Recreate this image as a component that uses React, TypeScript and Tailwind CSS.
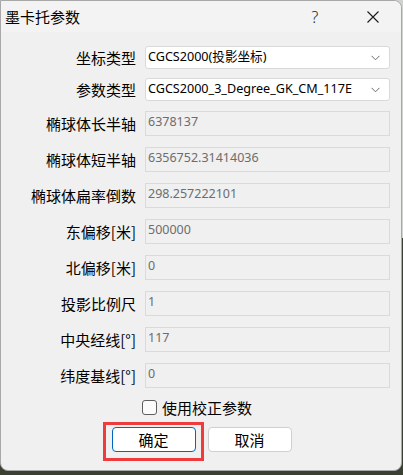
import React, { useState } from "react";

const cjk = "font-['Microsoft_YaHei','Noto_Sans_CJK_SC',sans-serif]";
const latin = "font-['Noto_Sans','Noto_Sans_CJK_SC',sans-serif]";

interface Field {
  label: React.ReactNode;
  value: string;
}

const fields: Field[] = [
  { label: "椭球体长半轴", value: "6378137" },
  { label: "椭球体短半轴", value: "6356752.31414036" },
  { label: "椭球体扁率倒数", value: "298.257222101" },
  { label: "东偏移[米]", value: "500000" },
  { label: "北偏移[米]", value: "0" },
  { label: "投影比例尺", value: "1" },
  { label: "中央经线[°]", value: "117" },
  { label: "纬度基线[°]", value: "0" },
];

const Chevron = () => (
  <svg width="9" height="6" viewBox="0 0 9 6" className="shrink-0">
    <path d="M0.5 0.8 L4.5 4.8 L8.5 0.8" fill="none" stroke="#6a6a6a" strokeWidth="1" />
  </svg>
);

const SelectBox = ({ value }: { value: string }) => (
  <div className="flex h-[23px] w-[245px] items-center justify-between rounded-[3px] border border-[#d9d9d9] bg-white pl-[2px] pr-[9px]">
    <span className={`${latin} text-[12.6px] leading-none text-black`}>{value}</span>
    <Chevron />
  </div>
);

const Row = ({ label, children, className }: { label: React.ReactNode; children: React.ReactNode; className: string }) => (
  <div className={`flex items-center ${className}`}>
    <div className={`${cjk} w-[135px] text-right text-[15px] leading-none text-black`}>{label}</div>
    <div className="ml-[9px]">{children}</div>
  </div>
);

export default function App() {
  const [useCorrection, setUseCorrection] = useState(false);

  return (
    <div className="h-[475px] w-[403px] bg-[linear-gradient(to_bottom,#cfd2cf_50%,#3a4133_50%)]">
      <div className="flex h-[471px] w-[402px] flex-col overflow-hidden rounded-tr-[8px] rounded-b-[8px] border border-[#a8a8a8] bg-[#f0f0f0]">
        {/* title bar */}
        <div className="flex h-[31px] shrink-0 items-center bg-[#f3f3f3]">
          <span className={`${cjk} pl-[4px] text-[15px] leading-none text-black`}>墨卡托参数</span>
          <span className={`${latin} ml-auto w-[46px] text-center text-[16px] font-light leading-none text-[#1a1a1a]`}>?</span>
          <span className="ml-[12px] mr-[5px] flex w-[46px] justify-center">
            <svg width="12" height="12" viewBox="0 0 12 12">
              <path d="M0.5 0.5 L11.5 11.5 M11.5 0.5 L0.5 11.5" stroke="#1a1a1a" strokeWidth="1.1" />
            </svg>
          </span>
        </div>

        {/* body */}
        <div className="flex flex-col">
          <Row label="坐标类型" className="mt-[14px]">
            <SelectBox value="CGCS2000(投影坐标)" />
          </Row>
          <Row label="参数类型" className="mt-[9px]">
            <SelectBox value="CGCS2000_3_Degree_GK_CM_117E" />
          </Row>

          {fields.map((f, i) => (
            <Row key={f.value + i} label={f.label} className={i === 0 ? "mt-[10px]" : "mt-[11px]"}>
              <div className="flex h-[25px] w-[245px] items-start border border-[#dadada] bg-[#f0f0f0] pl-[2px] pt-[4px]">
                <span className={`${latin} text-[12.5px] leading-none text-[#6d6d6d]`}>{f.value}</span>
              </div>
            </Row>
          ))}

          <label className="mt-[12px] flex cursor-default items-center justify-center pr-[8px]">
            <input
              type="checkbox"
              checked={useCorrection}
              onChange={(e) => setUseCorrection(e.target.checked)}
              className="sr-only"
            />
            <span className="h-[15px] w-[15px] rounded-[3px] border border-[#5f5f5f] bg-[#fbfbfb]" />
            <span className={`${cjk} ml-[5px] text-[15px] leading-none text-black`}>使用校正参数</span>
          </label>

          <div className="mt-[12px] flex justify-center gap-[12px] pl-[1px]">
            <div className="relative">
              <button className={`${cjk} h-[25px] w-[84px] rounded-[4px] border border-[#0067c0] bg-white text-[15px] leading-none text-black`}>
                确定
              </button>
              <div className="pointer-events-none absolute -left-[9px] -right-[8px] -top-[5px] -bottom-[9px] border-[3px] border-[#ef3b3b]" />
            </div>
            <button className={`${cjk} h-[25px] w-[84px] rounded-[4px] border border-[#d0d0d0] bg-white text-[15px] leading-none text-black`}>
              取消
            </button>
          </div>
        </div>
      </div>
    </div>
  );
}
